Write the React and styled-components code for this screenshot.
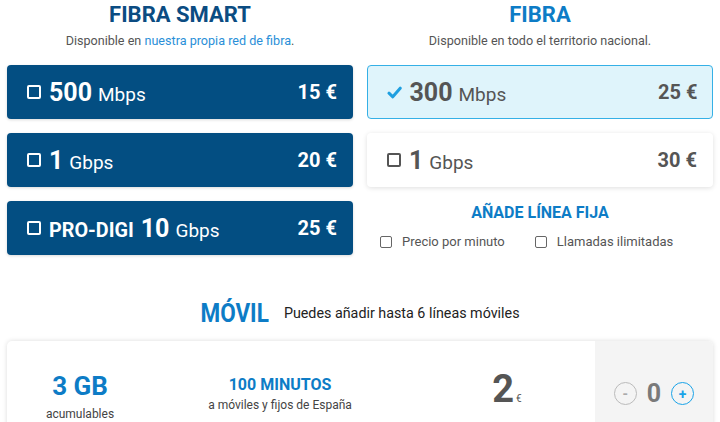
import React from "react";
import styled, { createGlobalStyle, css } from "styled-components";

const Global = createGlobalStyle`
  html, body { margin: 0; padding: 0; background: #fff; }
  body { font-family: Roboto, "Liberation Sans", Arial, sans-serif; color: #444; }
  * { box-sizing: border-box; }
`;

const Page = styled.div`
  padding: 0 7px;
`;

const TopGrid = styled.div`
  display: grid;
  grid-template-columns: 1fr 1fr;
  column-gap: 14px;
  align-items: start;
`;

const Column = styled.section`
  display: flex;
  flex-direction: column;
`;

const Title = styled.h2`
  margin: 2px 0 0;
  font-size: 22px;
  line-height: 26px;
  font-weight: 700;
  text-align: center;
  color: ${(p) => (p.$dark ? "#0b4c82" : "#0d7cc6")};
`;

const Subtitle = styled.p`
  margin: 5px 0 16px;
  font-size: 12.6px;
  line-height: 16px;
  text-align: center;
  color: #555;
  a { color: #2a8fd8; text-decoration: none; }
`;

const CardList = styled.div`
  display: flex;
  flex-direction: column;
  gap: 14px;
`;

const Card = styled.div`
  height: 54px;
  display: flex;
  align-items: center;
  padding: 0 16px 0 20px;
  border-radius: 4px;
  ${(p) =>
    p.$variant === "dark"
      ? css`
          background: #034e82;
          color: #fff;
          box-shadow: 0 1px 3px rgba(0, 0, 0, 0.15);
        `
      : p.$variant === "selected"
      ? css`
          background: #dff4fb;
          color: #555;
          border: 1.5px solid #35b0e6;
          padding-left: 18.5px;
          padding-right: 14.5px;
        `
      : css`
          background: #fff;
          color: #555;
          box-shadow: 0 1px 5px rgba(0, 0, 0, 0.13);
        `}
`;

const Box = styled.span`
  flex: none;
  width: 14px;
  height: 14px;
  border: 2px solid ${(p) => p.$color || "#fff"};
  border-radius: 2px;
  margin-right: 8px;
`;

const Check = styled.svg`
  flex: none;
  width: 15px;
  height: 13px;
  margin-right: 8px;
`;

const Speed = styled.span`
  display: flex;
  align-items: baseline;
  gap: 6px;
  flex: 1;
`;

const Prefix = styled.span`
  font-size: 19.8px;
  font-weight: 700;
  margin-right: 1px;
`;

const Big = styled.span`
  font-size: 25px;
  font-weight: 700;
`;

const Unit = styled.span`
  font-size: 19px;
  font-weight: 400;
`;

const Price = styled.span`
  font-size: 20px;
  font-weight: 700;
`;

const FixedTitle = styled.h3`
  margin: 17px 0 0;
  font-size: 16px;
  line-height: 18px;
  font-weight: 700;
  text-align: center;
  color: #0d7cc6;
`;

const OptionRow = styled.div`
  margin-top: 12px;
  display: flex;
  gap: 30px;
  padding-left: 13px;
`;

const Option = styled.label`
  display: flex;
  align-items: center;
  font-size: 13px;
  line-height: 16px;
  color: #555;
`;

const SmallBox = styled.span`
  width: 12px;
  height: 12px;
  border: 1.5px solid #666;
  border-radius: 2px;
  margin-right: 10px;
`;

const MobileHeader = styled.div`
  margin-top: 43px;
  display: flex;
  justify-content: center;
  align-items: center;
  gap: 15px;
`;

const MobileTitle = styled.h2`
  margin: 0;
  font-size: 22.5px;
  line-height: 30px;
  font-weight: 700;
  color: #0d7cc6;
  transform: scaleY(1.12);
`;

const MobileNote = styled.span`
  font-size: 14.3px;
  color: #222;
`;

const MobileCard = styled.div`
  margin-top: 13px;
  height: 105px;
  display: grid;
  grid-template-columns: 146px 254px 1fr 118px;
  border-radius: 5px;
  box-shadow: 0 0 5px rgba(0, 0, 0, 0.14);
  overflow: hidden;
`;

const Cell = styled.div`
  display: flex;
  flex-direction: column;
  align-items: center;
  justify-content: center;
  text-align: center;
  padding-top: ${(p) => p.$pt || 0}px;
  padding-left: ${(p) => p.$pl || 0}px;
`;

const DataAmount = styled.div`
  font-size: 26px;
  line-height: 30px;
  font-weight: 700;
  color: #0d7cc6;
`;

const Minutes = styled.div`
  font-size: 16px;
  line-height: 20px;
  font-weight: 700;
  color: #0d7cc6;
`;

const Caption = styled.div`
  margin-top: ${(p) => p.$mt || 3}px;
  font-size: 12px;
  line-height: 14px;
  color: #444;
`;

const MobilePrice = styled.div`
  font-size: 38px;
  line-height: 40px;
  font-weight: 700;
  color: #555;
  span { font-size: 10px; font-weight: 400; margin-left: 2px; }
`;

const Stepper = styled.div`
  background: #f4f4f4;
  display: flex;
  align-items: center;
  justify-content: center;
  gap: 10px;
`;

const Round = styled.span`
  width: 23px;
  height: 23px;
  border-radius: 50%;
  border: 1.5px solid ${(p) => (p.$active ? "#1aa3e8" : "#bbb")};
  color: ${(p) => (p.$active ? "#1aa3e8" : "#aaa")};
  display: flex;
  align-items: center;
  justify-content: center;
  font-size: 14px;
  font-weight: 700;
  line-height: 1;
`;

const Count = styled.span`
  font-size: 25px;
  font-weight: 700;
  color: #7a7a7a;
  line-height: 30px;
`;

const leftPlans = [
  { big: "500", unit: "Mbps", price: "15 €" },
  { big: "1", unit: "Gbps", price: "20 €" },
  { prefix: "PRO-DIGI", big: "10", unit: "Gbps", price: "25 €" },
];

const rightPlans = [
  { big: "300", unit: "Mbps", price: "25 €", selected: true },
  { big: "1", unit: "Gbps", price: "30 €" },
];

function PlanCard({ plan, variant }) {
  return (
    <Card $variant={variant}>
      {plan.selected ? (
        <Check viewBox="0 0 15 13">
          <path d="M2 7.2 L5.8 10.8 L13.2 2.2" fill="none" stroke="#1e9fe0" strokeWidth="3" strokeLinecap="round" strokeLinejoin="round" />
        </Check>
      ) : (
        <Box $color={variant === "dark" ? "#fff" : "#555"} />
      )}
      <Speed>
        {plan.prefix && <Prefix>{plan.prefix}</Prefix>}
        <Big>{plan.big}</Big>
        <Unit>{plan.unit}</Unit>
      </Speed>
      <Price>{plan.price}</Price>
    </Card>
  );
}

export default function App() {
  return (
    <>
      <Global />
      <Page>
        <TopGrid>
          <Column>
            <Title $dark>FIBRA SMART</Title>
            <Subtitle>
              Disponible en <a href="#">nuestra propia red de fibra</a>.
            </Subtitle>
            <CardList>
              {leftPlans.map((p, i) => (
                <PlanCard key={i} plan={p} variant="dark" />
              ))}
            </CardList>
          </Column>
          <Column>
            <Title>FIBRA</Title>
            <Subtitle>Disponible en todo el territorio nacional.</Subtitle>
            <CardList>
              {rightPlans.map((p, i) => (
                <PlanCard key={i} plan={p} variant={p.selected ? "selected" : "light"} />
              ))}
            </CardList>
            <FixedTitle>AÑADE LÍNEA FIJA</FixedTitle>
            <OptionRow>
              <Option>
                <SmallBox />
                Precio por minuto
              </Option>
              <Option>
                <SmallBox />
                Llamadas ilimitadas
              </Option>
            </OptionRow>
          </Column>
        </TopGrid>

        <MobileHeader>
          <MobileTitle>MÓVIL</MobileTitle>
          <MobileNote>Puedes añadir hasta 6 líneas móviles</MobileNote>
        </MobileHeader>

        <MobileCard>
          <Cell $pt={5}>
            <DataAmount>3 GB</DataAmount>
            <Caption $mt={6}>acumulables</Caption>
          </Cell>
          <Cell>
            <Minutes>100 MINUTOS</Minutes>
            <Caption $mt={3}>a móviles y fijos de España</Caption>
          </Cell>
          <Cell $pl={12}>
            <MobilePrice>
              2<span>€</span>
            </MobilePrice>
          </Cell>
          <Stepper>
            <Round>-</Round>
            <Count>0</Count>
            <Round $active>+</Round>
          </Stepper>
        </MobileCard>
      </Page>
    </>
  );
}
